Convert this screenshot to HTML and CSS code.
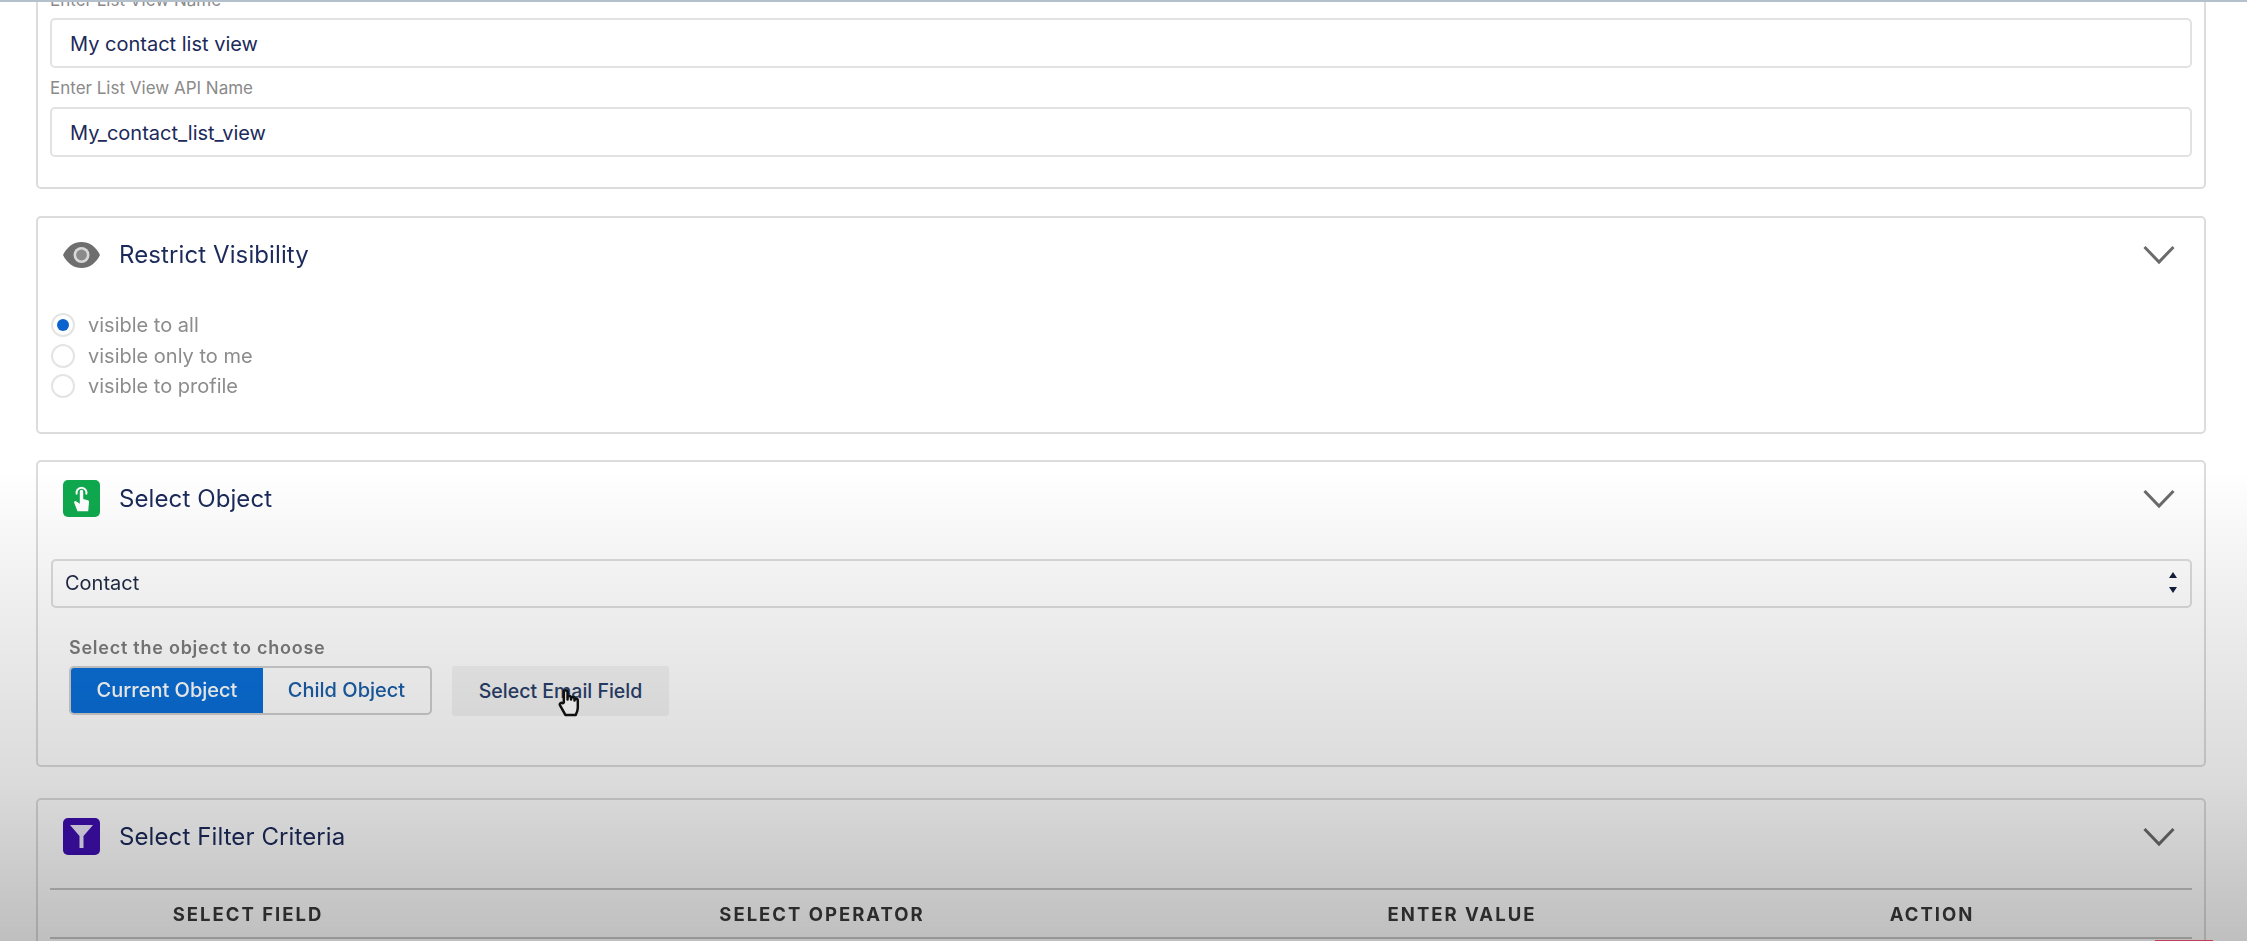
FILE: index.html
```html
<!DOCTYPE html>
<html lang="en">
<head>
<meta charset="utf-8">
<title>List View Builder</title>
<link rel="stylesheet" href="styles.css">
</head>
<body>
<div class="topstrip"></div>
<main class="page">
  <section class="card card-name">
    <div class="field-label">Enter List View Name</div>
    <div class="text-input">My contact list view</div>
    <div class="field-label field-label-next">Enter List View API Name</div>
    <div class="text-input">My_contact_list_view</div>
  </section>

  <section class="card card-visibility">
    <header class="card-head">
      <svg class="eye" viewBox="0 0 37 26" aria-hidden="true">
        <path fill="#6e6e6e" d="M0 13C4 4.500 11 0 18.500 0S33 4.500 37 13c-4 8.500-11 13-18.500 13S4 21.500 0 13z"/>
        <circle cx="18.500" cy="13" r="8" fill="#d8d8d8"/>
        <circle cx="18.500" cy="13" r="5.400" fill="#8a8a8a"/>
      </svg>
      <h2 class="card-title">Restrict Visibility</h2>
      <svg class="chevron" viewBox="0 0 32 20" aria-hidden="true"><path d="M1.500 2 16 17 30.500 2"/></svg>
    </header>
    <div class="radios">
      <div class="radio-row"><span class="radio radio-on"></span><span>visible to all</span></div>
      <div class="radio-row"><span class="radio"></span><span>visible only to me</span></div>
      <div class="radio-row"><span class="radio"></span><span>visible to profile</span></div>
    </div>
  </section>

  <section class="card card-object">
    <header class="card-head">
      <span class="tile tile-green">
        <svg viewBox="0 0 37 37" aria-hidden="true">
          <path fill="none" stroke="#fff" stroke-width="2" d="M13.800 14.500a5 5 0 1 1 9.400 0"/>
          <path fill="#fff" d="M16.800 11.500a1.700 1.700 0 0 1 3.400 0v7.500l4.600 1.300c1 .3 1.300 1 1.200 2l-.8 9H14.500l-3.300-8.500c-.5-1.300 1.100-2.300 2.100-1.400l3.500 2.400z"/>
        </svg>
      </span>
      <h2 class="card-title">Select Object</h2>
      <svg class="chevron" viewBox="0 0 32 20" aria-hidden="true"><path d="M1.500 2 16 17 30.500 2"/></svg>
    </header>
    <div class="select">
      <span>Contact</span>
      <span class="select-arrows"><i class="arrow-up"></i><i class="arrow-down"></i></span>
    </div>
    <div class="object-choice">
      <div class="choice-label">Select the object to choose</div>
      <div class="choice-row">
        <div class="toggle">
          <span class="toggle-opt toggle-on">Current Object</span>
          <span class="toggle-opt">Child Object</span>
        </div>
        <div class="email-btn">Select Email Field
          <svg class="hand" viewBox="0 0 22 28" aria-hidden="true">
            <path fill="#fff" stroke="#111" stroke-width="2.400" stroke-linejoin="round" d="M6 14V4a1.800 1.800 0 0 1 3.600 0v7-2a1.800 1.800 0 0 1 3.400 0v2-1a1.700 1.700 0 0 1 3.300 0v2a1.600 1.600 0 0 1 3.200 0v7c0 3-1 5-2 7H7.500L2.500 17c-1.200-1.800 1-3.600 2.500-2.200z"/>
          </svg>
        </div>
      </div>
    </div>
  </section>

  <section class="card card-filter">
    <header class="card-head">
      <span class="tile tile-purple">
        <svg viewBox="0 0 37 37" aria-hidden="true">
          <path fill="#ece6fb" d="M7 7h23l-9.500 11v12h-4V18z"/>
        </svg>
      </span>
      <h2 class="card-title">Select Filter Criteria</h2>
      <svg class="chevron" viewBox="0 0 32 20" aria-hidden="true"><path d="M1.500 2 16 17 30.500 2"/></svg>
    </header>
    <div class="filter-head">
      <span>SELECT FIELD</span>
      <span>SELECT OPERATOR</span>
      <span>ENTER VALUE</span>
      <span>ACTION</span>
    </div>
    <div class="filter-row"><span class="delete-btn"></span></div>
  </section>
</main>
<div class="shade"></div>
</body>
</html>
```

FILE: styles.css
```css
* { box-sizing: border-box; }

html, body {
  margin: 0;
  height: 941px;
  overflow: hidden;
  background: #fff;
}

body {
  position: relative;
  font-family: Inter, "Liberation Sans", sans-serif;
  color: #16325c;
}

.topstrip {
  position: absolute;
  top: 0;
  left: 0;
  right: 0;
  height: 2px;
  background: #b4c0cb;
  z-index: 3;
}

.page {
  display: flex;
  flex-direction: column;
  height: 941px;
  overflow: hidden;
  padding: 0 41px 0 36px;
  filter: blur(0.55px);
}

.card {
  flex: none;
  background: #fff;
  border: 2px solid #dcdcdc;
  border-radius: 5px;
}

.card-name {
  height: 229px;
  margin-top: -40px;
  padding: 28px 12px 0;
}

.card-visibility {
  height: 218px;
  margin-top: 27px;
}

.card-object {
  height: 307px;
  margin-top: 26px;
}

.card-filter {
  height: 300px;
  margin-top: 31px;
}

.field-label {
  height: 20px;
  margin-bottom: 8px;
  font-size: 17px;
  line-height: 20px;
  color: #8a8a8a;
}

.field-label-next {
  margin-top: 10px;
  margin-bottom: 9px;
}

.text-input {
  height: 50px;
  padding-left: 18px;
  border: 2px solid #e2e2e2;
  border-radius: 5px;
  font-size: 20px;
  line-height: 49px;
  color: #1b2a5a;
  background: #fff;
}

.card-head {
  display: flex;
  align-items: center;
  height: 37px;
  margin: 18px 0 0;
  padding: 0 29px 0 25px;
}

.card-title {
  margin: 0 0 0 19px;
  font-size: 24px;
  font-weight: 400;
  line-height: 37px;
  letter-spacing: .1px;
  color: #1b2a5a;
}

.eye {
  width: 37px;
  height: 26px;
}

.chevron {
  width: 32px;
  height: 20px;
  margin-left: auto;
  fill: none;
  stroke: #6b6b6b;
  stroke-width: 3;
}

.tile {
  display: block;
  width: 37px;
  height: 37px;
  border-radius: 5px;
}

.tile svg {
  display: block;
  width: 37px;
  height: 37px;
}

.tile-green { background: #10a94e; }
.tile-purple { background: #3f0fb0; }

.radios {
  margin: 37px 0 0 13px;
}

.radio-row {
  display: flex;
  align-items: center;
  gap: 13px;
  height: 30.500px;
  font-size: 20px;
  color: #8c8c8c;
}

.radio {
  position: relative;
  width: 24px;
  height: 24px;
  border: 2px solid #e4e4e4;
  border-radius: 50%;
  background: #fff;
}

.radio-on::after {
  content: "";
  position: absolute;
  top: 4px;
  left: 4px;
  width: 12px;
  height: 12px;
  border-radius: 50%;
  background: #0b63ce;
}

.select {
  display: flex;
  align-items: center;
  justify-content: space-between;
  height: 49px;
  margin: 42px 12px 0 13px;
  padding: 0 13px 2px 12px;
  border: 2px solid #dcdcdc;
  border-radius: 5px;
  font-size: 20px;
  color: #1f2a44;
  background: #fff;
}

.select-arrows {
  display: flex;
  flex-direction: column;
  gap: 9px;
}

.select-arrows i {
  display: block;
  width: 0;
  height: 0;
  border-left: 4px solid transparent;
  border-right: 4px solid transparent;
}

.arrow-up { border-bottom: 6px solid #16203f; }
.arrow-down { border-top: 6px solid #16203f; }

.object-choice {
  margin: 29px 0 0 31px;
}

.choice-label {
  height: 22px;
  font-size: 18px;
  font-weight: 600;
  line-height: 22px;
  letter-spacing: .75px;
  color: #7c7c7c;
}

.choice-row {
  display: flex;
  gap: 20px;
  margin-top: 7px;
}

.toggle {
  display: flex;
  width: 363px;
  height: 49px;
  border: 2px solid #d0d0d0;
  border-radius: 5px;
  overflow: hidden;
  background: #fff;
}

.toggle-opt {
  flex: 1;
  font-size: 20px;
  font-weight: 500;
  line-height: 45px;
  text-align: center;
  color: #1b5fa8;
}

.toggle-on {
  flex: none;
  width: 192px;
  color: #fff;
  background: #0b6fd8;
}

.email-btn {
  position: relative;
  width: 217px;
  height: 50px;
  font-size: 19.500px;
  font-weight: 500;
  line-height: 50px;
  text-align: center;
  color: #2a3f6a;
  background: #f3f3f3;
  border-radius: 3px;
}

.hand {
  position: absolute;
  top: 22px;
  left: 105px;
  width: 24px;
  height: 29px;
}

.filter-head {
  display: grid;
  grid-template-columns: 396px 752px 528px 412px;
  align-items: center;
  height: 51px;
  margin: 33px 12px 0;
  border-top: 2px solid #c8c8c8;
  border-bottom: 2px solid #c8c8c8;
  font-size: 18.500px;
  font-weight: 700;
  letter-spacing: 2px;
  text-align: center;
  color: #3a3a3a;
}

.filter-row {
  display: flex;
  justify-content: flex-end;
  margin: 1px -9px 0 0;
}

.delete-btn {
  width: 58px;
  height: 40px;
  background: #ff5577;
}

.shade {
  position: absolute;
  top: 0;
  left: 0;
  right: 0;
  bottom: 0;
  z-index: 2;
  pointer-events: none;
  background: linear-gradient(to bottom,
    rgba(0,0,0,0) 50%,
    rgba(0,0,0,.07) 65%,
    rgba(0,0,0,.14) 83%,
    rgba(0,0,0,.25) 100%);
}
```
